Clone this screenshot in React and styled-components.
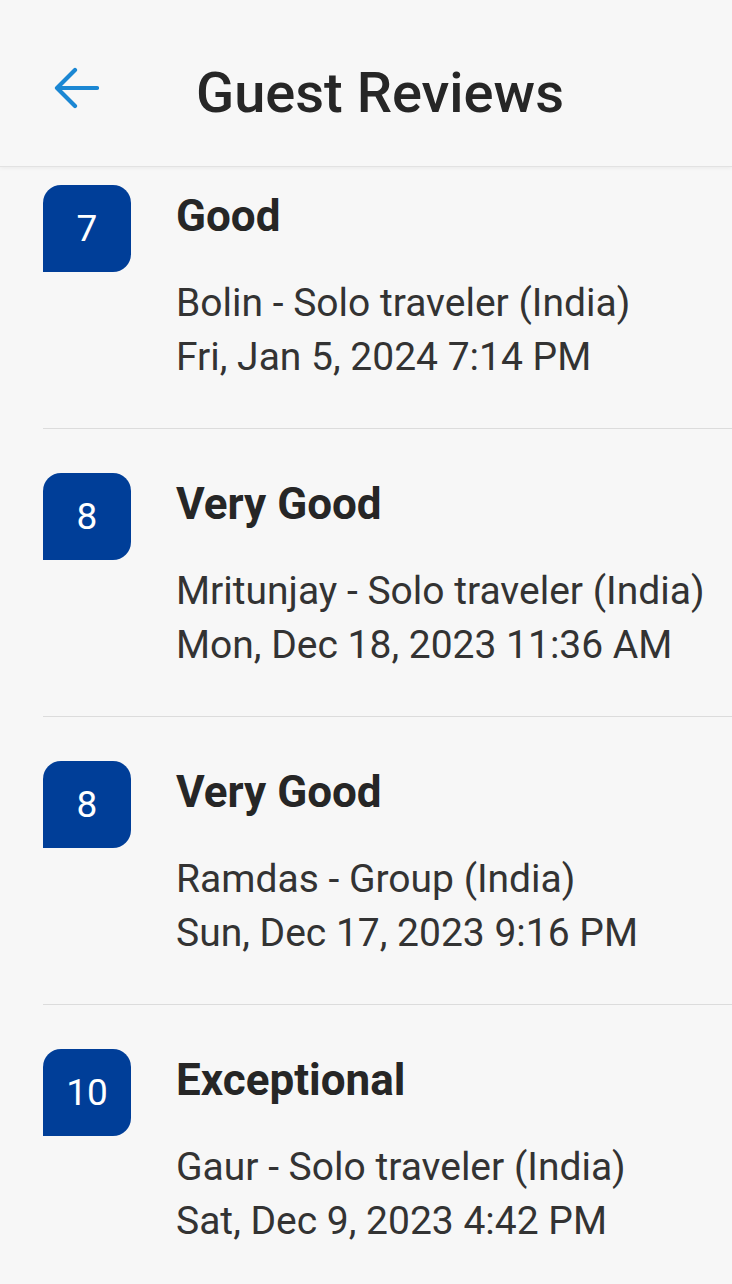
import React from "react";
import styled, { createGlobalStyle } from "styled-components";

const Global = createGlobalStyle`
  html, body { margin: 0; padding: 0; background: #f7f7f7; }
  body { font-family: Roboto, "Noto Sans", sans-serif; -webkit-font-smoothing: antialiased; }
`;

const Page = styled.div`
  width: 732px;
  height: 1284px;
  overflow: hidden;
  background: #f7f7f7;
  display: flex;
  flex-direction: column;
`;

const Header = styled.header`
  position: relative;
  z-index: 2;
  flex: 0 0 166px;
  display: flex;
  align-items: center;
  padding: 10px 0 0 52px;
  box-sizing: border-box;
  background: #f7f7f7;
  box-shadow: 0 1px 0 #e2e2e2, 0 2px 4px rgba(0, 0, 0, 0.06);
`;

const BackButton = styled.button`
  border: none;
  background: none;
  padding: 0;
  width: 48px;
  height: 48px;
  display: flex;
  align-items: center;
  justify-content: center;
  color: #1b87d3;
  cursor: pointer;
`;

const Title = styled.h1`
  margin: 9px 0 0 96px;
  font-size: 56px;
  font-weight: 500;
  color: #262626;
  letter-spacing: 0;
`;

const Viewport = styled.div`
  position: relative;
  z-index: 1;
  flex: 1;
  overflow: hidden;
`;

const List = styled.ul`
  list-style: none;
  margin: -25px 0 0 0;
  padding: 0;
`;

const Item = styled.li`
  margin-left: 43px;
  padding: 44px 0 44px 0;
  border-bottom: 1px solid #dcdcdc;
  display: flex;
  gap: 45px;
`;

const Badge = styled.div`
  flex: 0 0 88px;
  height: 87px;
  background: #003e98;
  border-radius: 18px 18px 18px 0;
  color: #ffffff;
  font-size: 37px;
  font-weight: 400;
  display: flex;
  align-items: center;
  justify-content: center;
`;

const Body = styled.div`
  padding-top: 5px;
  display: flex;
  flex-direction: column;
`;

const Rating = styled.div`
  font-size: 44px;
  line-height: 52px;
  font-weight: 700;
  color: #262626;
`;

const Meta = styled.div`
  margin-top: 34px;
  font-size: 39px;
  line-height: 54px;
  color: #333333;
  white-space: nowrap;
`;

const reviews = [
  { score: 7, label: "Good", who: "Bolin - Solo traveler (India)", when: "Fri, Jan 5, 2024 7:14 PM" },
  { score: 8, label: "Very Good", who: "Mritunjay - Solo traveler (India)", when: "Mon, Dec 18, 2023 11:36 AM" },
  { score: 8, label: "Very Good", who: "Ramdas - Group (India)", when: "Sun, Dec 17, 2023 9:16 PM" },
  { score: 10, label: "Exceptional", who: "Gaur - Solo traveler (India)", when: "Sat, Dec 9, 2023 4:42 PM" },
];

function ArrowBack() {
  return (
    <svg width="46" height="42" viewBox="0 0 46 42" fill="none">
      <path
        d="M44 21H5M22 3L4 21l18 18"
        stroke="currentColor"
        strokeWidth="4.2"
        strokeLinecap="round"
        strokeLinejoin="round"
      />
    </svg>
  );
}

export default function App() {
  return (
    <>
      <Global />
      <Page>
        <Header>
          <BackButton aria-label="Back">
            <ArrowBack />
          </BackButton>
          <Title>Guest Reviews</Title>
        </Header>
        <Viewport>
          <List>
            {reviews.map((r, i) => (
              <Item key={i}>
                <Badge>{r.score}</Badge>
                <Body>
                  <Rating>{r.label}</Rating>
                  <Meta>
                    {r.who}
                    <br />
                    {r.when}
                  </Meta>
                </Body>
              </Item>
            ))}
          </List>
        </Viewport>
      </Page>
    </>
  );
}
